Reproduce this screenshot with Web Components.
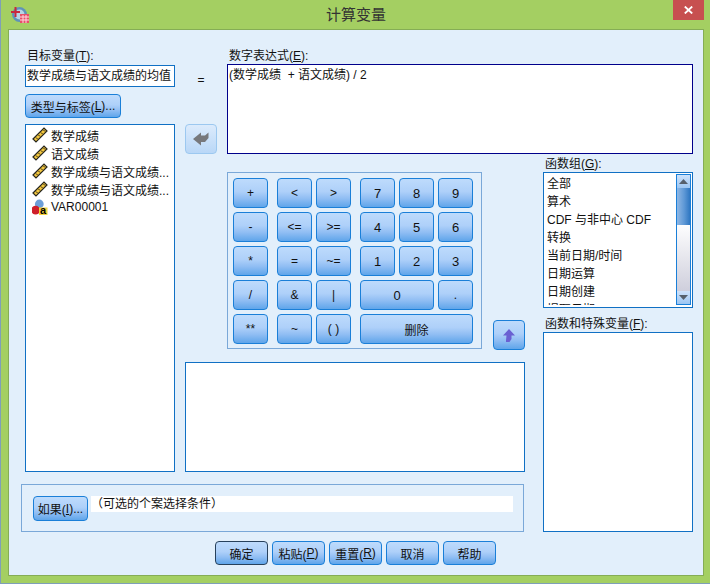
<!DOCTYPE html>
<html lang="zh">
<head>
<meta charset="utf-8">
<title>计算变量</title>
<style>
    html, body { margin: 0; padding: 0; height: 100%; overflow: hidden; background: #7f9fb8; }
    body { font: 12px "Liberation Sans", "Noto Sans CJK SC", sans-serif; color: #111; }
    u { text-underline-offset: 1px; }
</style>
</head>
<body>

<dlg-window>
    <title-bar slot="title">计算变量</title-bar>

    <dlg-label slot="target-label">目标变量(<u>T</u>):</dlg-label>
    <dlg-input slot="target">数学成绩与语文成绩的均值</dlg-input>
    <dlg-button slot="type-btn" w="96" h="24">类型与标签(<u>L</u>)...</dlg-button>

    <dlg-label slot="expr-label">数字表达式(<u>E</u>):</dlg-label>
    <expr-box slot="expr">(数学成绩&nbsp; + 语文成绩) / 2</expr-box>
    <span slot="equals">=</span>

    <list-box slot="vars">
        <var-item kind="scale">数学成绩</var-item>
        <var-item kind="scale">语文成绩</var-item>
        <var-item kind="scale">数学成绩与语文成绩...</var-item>
        <var-item kind="scale">数学成绩与语文成绩...</var-item>
        <var-item kind="nominal">VAR00001</var-item>
    </list-box>

    <arrow-button slot="move" dir="left"></arrow-button>
    <key-pad slot="keys"></key-pad>
    <arrow-button slot="up" dir="up"></arrow-button>
    <list-box slot="preview"></list-box>

    <dlg-label slot="group-label">函数组(<u>G</u>):</dlg-label>
    <scroll-list slot="groups">
        <div>全部</div>
        <div>算术</div>
        <div>CDF 与非中心 CDF</div>
        <div>转换</div>
        <div>当前日期/时间</div>
        <div>日期运算</div>
        <div>日期创建</div>
        <div>提取日期</div>
    </scroll-list>
    <dlg-label slot="func-label">函数和特殊变量(<u>F</u>):</dlg-label>
    <list-box slot="funcs"></list-box>

    <if-panel slot="if">（可选的个案选择条件）</if-panel>

    <dlg-button slot="actions" w="53" h="24" primary>确定</dlg-button>
    <dlg-button slot="actions" w="53" h="24">粘贴(<u>P</u>)</dlg-button>
    <dlg-button slot="actions" w="53" h="24">重置(<u>R</u>)</dlg-button>
    <dlg-button slot="actions" w="53" h="24">取消</dlg-button>
    <dlg-button slot="actions" w="53" h="24">帮助</dlg-button>
</dlg-window>

<script>
const FACE = `linear-gradient(#bedbfc 0%, #aed0f9 45%, #8fbdf3 70%, #5fa5ea 100%)`

class DlgWindow extends HTMLElement
{
    constructor(){
        super()
        this.attachShadow({ mode: "open" })
    }

    connectedCallback(){
        this.shadowRoot.innerHTML = `
            <style>
            :host {
                display: flex;
                flex-direction: column;
                width: 709px;
                height: 583px;
                margin-left: 1px;
                background: #a4cf62;
            }
            .client {
                box-sizing: border-box;
                width: 696px;
                height: 547px;
                margin-left: 7px;
                padding: 18px 0 0 12px;
                background: #e2effb;
                border: 1px solid #85ad55;
            }
            .grid {
                display: grid;
                grid-template-columns: 4px 150px 10px 32px 10px 255px 43px 18px 150px;
                grid-template-rows: 16px 60px 30px 18px 178px 12px 110px 12px 48px 9px 24px;
            }
            .target { grid-area: 1 / 2 / 3 / 3; display: flex; flex-direction: column; }
            .target ::slotted([slot="target"]) { margin-top: 1px; }
            .target ::slotted([slot="type-btn"]) { margin-top: 7px; }
            .eq { grid-area: 2 / 4 / 3 / 5; text-align: center; padding-top: 9px; font-size: 12px; }
            .expr { grid-area: 1 / 6 / 4 / 10; display: flex; flex-direction: column; }
            .vars { grid-area: 3 / 2 / 8 / 3; display: flex; }
            .move { grid-area: 3 / 4 / 4 / 5; }
            .keys { grid-area: 5 / 6 / 6 / 7; }
            .up { grid-area: 5 / 7 / 6 / 8; align-self: end; justify-self: end; }
            .preview { grid-area: 7 / 4 / 8 / 8; display: flex; }
            .right { grid-area: 4 / 9 / 10 / 10; display: flex; flex-direction: column; padding-top: 2px; }
            .right ::slotted([slot="func-label"]) { margin-top: 8px; }
            .right ::slotted([slot="groups"]) { height: 136px; }
            .right ::slotted([slot="funcs"]) { height: 200px; }
            .if { grid-area: 9 / 1 / 10 / 8; margin-right: 1px; display: flex; }
            .actions { grid-area: 11 / 1 / 12 / 10; display: flex; gap: 4px; padding-left: 194px; }
            </style>
            <slot name="title"></slot>
            <div class="client">
                <div class="grid">
                    <div class="target">
                        <slot name="target-label"></slot>
                        <slot name="target"></slot>
                        <slot name="type-btn"></slot>
                    </div>
                    <div class="eq"><slot name="equals"></slot></div>
                    <div class="expr">
                        <slot name="expr-label"></slot>
                        <slot name="expr"></slot>
                    </div>
                    <div class="vars"><slot name="vars"></slot></div>
                    <div class="move"><slot name="move"></slot></div>
                    <div class="keys"><slot name="keys"></slot></div>
                    <div class="up"><slot name="up"></slot></div>
                    <div class="preview"><slot name="preview"></slot></div>
                    <div class="right">
                        <slot name="group-label"></slot>
                        <slot name="groups"></slot>
                        <slot name="func-label"></slot>
                        <slot name="funcs"></slot>
                    </div>
                    <div class="if"><slot name="if"></slot></div>
                    <div class="actions"><slot name="actions"></slot></div>
                </div>
            </div>
        `
    }
}

class TitleBar extends HTMLElement
{
    constructor(){
        super()
        this.attachShadow({ mode: "open" })
    }

    connectedCallback(){
        this.shadowRoot.innerHTML = `
            <style>
            :host {
                display: flex;
                align-items: flex-start;
                height: 29px;
                position: relative;
                flex: none;
            }
            .icon { width: 18px; height: 18px; margin: 6px 0 0 10px; }
            .text {
                position: absolute;
                left: 325px;
                top: 5px;
                font-size: 15px;
                line-height: 20px;
                color: #333;
            }
            .close {
                position: absolute;
                left: 672px;
                top: 0;
                width: 31px;
                height: 20px;
                background: #c75050;
                display: flex;
                align-items: center;
                justify-content: center;
            }
            </style>
            <svg class="icon" viewBox="0 0 18 18">
                <circle cx="8.5" cy="8.5" r="7.5" fill="#5f93b8"/>
                <circle cx="8.5" cy="8.5" r="5" fill="#b9d4e6"/>
                <path d="M0 6h9M4.5 1v10" stroke="#c8283c" stroke-width="2" fill="none"/>
                <rect x="9" y="8" width="9" height="9" fill="#e8506a"/>
                <path d="M9 11h9M9 14h9M12 9v8M15 9v8" stroke="#ffd8de" stroke-width="1"/>
            </svg>
            <span class="text"><slot></slot></span>
            <div class="close">
                <svg width="9" height="8" viewBox="0 0 9 8">
                    <path d="M.8.5l7.4 7M8.2.5l-7.4 7" stroke="#fff" stroke-width="1.8" fill="none"/>
                </svg>
            </div>
        `
    }
}

class DlgLabel extends HTMLElement
{
    constructor(){
        super()
        this.attachShadow({ mode: "open" })
    }

    connectedCallback(){
        this.shadowRoot.innerHTML = `
            <style>
            :host { display: block; height: 16px; line-height: 16px; padding-left: 2px; white-space: nowrap; }
            </style>
            <slot></slot>
        `
    }
}

class DlgInput extends HTMLElement
{
    constructor(){
        super()
        this.attachShadow({ mode: "open" })
    }

    connectedCallback(){
        this.shadowRoot.innerHTML = `
            <style>
            :host {
                display: block;
                box-sizing: border-box;
                height: 22px;
                line-height: 20px;
                padding-left: 1px;
                background: #fff;
                border: 1px solid #1070c4;
                white-space: nowrap;
                overflow: hidden;
            }
            </style>
            <slot></slot>
        `
    }
}

class ExprBox extends HTMLElement
{
    constructor(){
        super()
        this.attachShadow({ mode: "open" })
    }

    connectedCallback(){
        this.shadowRoot.innerHTML = `
            <style>
            :host {
                display: block;
                flex: 1;
                box-sizing: border-box;
                padding: 2px 0 0 1px;
                line-height: 16px;
                background: #fff;
                border: 1px solid #00008b;
                margin-top: 0;
            }
            </style>
            <slot></slot>
        `
    }
}

class DlgButton extends HTMLElement
{
    constructor(){
        super()
        this.attachShadow({ mode: "open" })
    }

    connectedCallback(){
        const w = this.getAttribute('w')
        const h = this.getAttribute('h')
        const border = this.hasAttribute('primary') ? '#27415c' : '#1a7fd8'
        this.shadowRoot.innerHTML = `
            <style>
            :host {
                display: flex;
                align-items: center;
                justify-content: center;
                box-sizing: border-box;
                flex: none;
                width: ${w ? w + 'px' : 'auto'};
                height: ${h ? h + 'px' : 'auto'};
                border: 1px solid ${border};
                border-radius: 4px;
                background: ${FACE};
                white-space: nowrap;
                font-size: 12px;
            }
            </style>
            <slot></slot>
        `
    }
}

class ArrowButton extends HTMLElement
{
    constructor(){
        super()
        this.attachShadow({ mode: "open" })
    }

    connectedCallback(){
        const left = this.getAttribute('dir') == 'left'
        this.shadowRoot.innerHTML = `
            <style>
            :host {
                display: flex;
                align-items: center;
                justify-content: center;
                box-sizing: border-box;
                width: 32px;
                height: 30px;
                border: 1px solid ${left ? '#9cc8f0' : '#1a7fd8'};
                border-radius: 4px;
                background: ${left ? 'linear-gradient(#dcebfc, #b9d7f7)' : FACE};
            }
            </style>
            ${left
                ? `<svg width="16" height="14" viewBox="0 0 16 14"><path d="M0 7L8 .5V3.5L12 3.5L15.5 .5V6L12 10H8V13.5Z" fill="#77787c"/></svg>`
                : `<svg width="12" height="13" viewBox="0 0 12 13"><path d="M6 0L12 6.5H8.5V10L6.5 13H3V11.5L3.5 6.5H0Z" fill="#6a60d2"/></svg>`}
        `
    }
}

class ListBox extends HTMLElement
{
    constructor(){
        super()
        this.attachShadow({ mode: "open" })
    }

    connectedCallback(){
        this.shadowRoot.innerHTML = `
            <style>
            :host {
                display: block;
                flex: 1;
                box-sizing: border-box;
                padding: 1px 0 0 1px;
                background: #fff;
                border: 1px solid #1070c4;
            }
            </style>
            <slot></slot>
        `
    }
}

class VarItem extends HTMLElement
{
    constructor(){
        super()
        this.attachShadow({ mode: "open" })
    }

    connectedCallback(){
        const ruler = `
            <svg width="16" height="16" viewBox="0 0 16 16">
                <path d="M1 12L12 1L15 4L4 15Z" fill="#f2c63e" stroke="#26251c" stroke-width="1.2"/>
                <path d="M4 10.5l1.5 1.5M6.5 8l1.5 1.5M9 5.5l1.5 1.5M11.5 3l1.5 1.5" stroke="#26251c" stroke-width="1"/>
            </svg>`
        const ball = `
            <svg width="16" height="16" viewBox="0 0 16 16">
                <circle cx="7.3" cy="5" r="4.4" fill="#6d9fd8"/>
                <circle cx="3.6" cy="11.2" r="4.4" fill="#cf1f2a"/>
                <rect x="7" y="8.5" width="8.5" height="7.5" fill="#f6d23c"/>
                <text x="8" y="15.4" font-size="11" font-weight="bold" font-family="Liberation Sans" fill="#000">a</text>
            </svg>`
        this.shadowRoot.innerHTML = `
            <style>
            :host {
                display: flex;
                align-items: center;
                gap: 3px;
                height: 18px;
                padding-left: 5px;
                white-space: nowrap;
            }
            svg { flex: none; }
            </style>
            ${this.getAttribute('kind') == 'nominal' ? ball : ruler}
            <span><slot></slot></span>
        `
    }
}

class ScrollList extends HTMLElement
{
    constructor(){
        super()
        this.attachShadow({ mode: "open" })
    }

    connectedCallback(){
        this.shadowRoot.innerHTML = `
            <style>
            :host {
                display: flex;
                box-sizing: border-box;
                background: #fff;
                border: 1px solid #1070c4;
                padding: 1px 1px 2px 3px;
                overflow: hidden;
            }
            .items { flex: 1; overflow: hidden; padding-top: 1px; }
            ::slotted(div) { height: 18px; line-height: 18px; white-space: nowrap; }
            .bar {
                flex: none;
                width: 15px;
                display: flex;
                flex-direction: column;
                border: 1px solid #1a7fd8;
                box-sizing: border-box;
            }
            .btn {
                height: 13px;
                flex: none;
                background: linear-gradient(#cfe3fb, #9cc6f3);
                display: flex;
                align-items: center;
                justify-content: center;
            }
            .thumb {
                height: 37px;
                flex: none;
                background: linear-gradient(90deg, #8fb7e4, #5e98d6 55%, #2f77c2);
            }
            .track { flex: 1; background: linear-gradient(#fdfdfe, #cfcfdc); }
            </style>
            <div class="items"><slot></slot></div>
            <div class="bar">
                <div class="btn"><svg width="9" height="5" viewBox="0 0 9 5"><path d="M4.5 0L9 5H0Z" fill="#56606c"/></svg></div>
                <div class="thumb"></div>
                <div class="track"></div>
                <div class="btn"><svg width="9" height="5" viewBox="0 0 9 5"><path d="M0 0H9L4.5 5Z" fill="#56606c"/></svg></div>
            </div>
        `
    }
}

class KeyPad extends HTMLElement
{
    constructor(){
        super()
        this.attachShadow({ mode: "open" })
    }

    connectedCallback(){
        // label, column track, span
        const keys = [
            ['+',1,1], ['<',3,1], ['>',4,1], ['7',6,1], ['8',7,1], ['9',8,1],
            ['-',1,1], ['<=',3,1], ['>=',4,1], ['4',6,1], ['5',7,1], ['6',8,1],
            ['*',1,1], ['=',3,1], ['~=',4,1], ['1',6,1], ['2',7,1], ['3',8,1],
            ['/',1,1], ['&',3,1], ['|',4,1], ['0',6,2], ['.',8,1],
            ['**',1,1], ['~',3,1], ['( )',4,1], ['删除',6,3],
        ]
        const esc = s => s.replace(/&/g, '&amp;').replace(/</g, '&lt;')
        this.shadowRoot.innerHTML = `
            <style>
            :host {
                display: block;
                box-sizing: border-box;
                height: 177px;
                padding: 5px;
                border: 1px solid #7aa8d8;
            }
            .pad {
                display: grid;
                grid-template-columns: 35px 1px 35px 35px 1px 35px 35px 35px;
                grid-auto-rows: 30px;
                gap: 4px;
            }
            </style>
            <div class="pad">
                ${keys.map(k => `<dlg-button style="grid-column:${k[1]} / span ${k[2]}${/\d/.test(k[0]) ? ';font-size:13px' : ''}">${esc(k[0])}</dlg-button>`).join('')}
            </div>
        `
    }
}

class IfPanel extends HTMLElement
{
    constructor(){
        super()
        this.attachShadow({ mode: "open" })
    }

    connectedCallback(){
        this.shadowRoot.innerHTML = `
            <style>
            :host {
                display: flex;
                flex: 1;
                align-items: flex-start;
                box-sizing: border-box;
                padding: 11px 10px 0 11px;
                gap: 3px;
                border: 1px solid #7aa8d8;
            }
            .cond {
                flex: 1;
                height: 16px;
                line-height: 17px;
                background: #fff;
                white-space: nowrap;
            }
            </style>
            <dlg-button w="55" h="25">如果(<u>I</u>)...</dlg-button>
            <div class="cond"><slot></slot></div>
        `
    }
}

customElements.define("dlg-window", DlgWindow)
customElements.define("title-bar", TitleBar)
customElements.define("dlg-label", DlgLabel)
customElements.define("dlg-input", DlgInput)
customElements.define("expr-box", ExprBox)
customElements.define("dlg-button", DlgButton)
customElements.define("arrow-button", ArrowButton)
customElements.define("list-box", ListBox)
customElements.define("var-item", VarItem)
customElements.define("scroll-list", ScrollList)
customElements.define("key-pad", KeyPad)
customElements.define("if-panel", IfPanel)
</script>
</body>
</html>
